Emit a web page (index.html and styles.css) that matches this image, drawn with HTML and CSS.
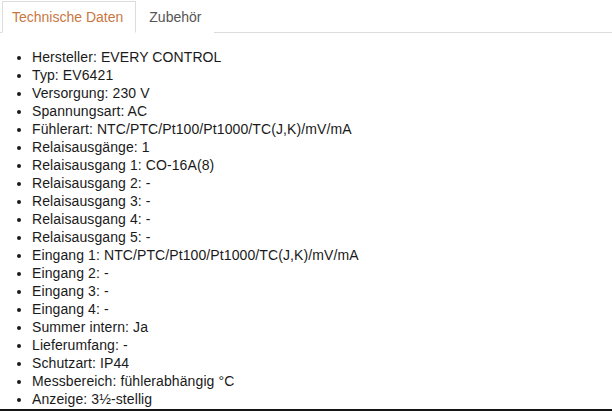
FILE: index.html
```html
<!DOCTYPE html>
<html lang="de">
<head>
<meta charset="utf-8">
<title>Technische Daten</title>
<link rel="stylesheet" href="styles.css">
</head>
<body>
<div class="page">
  <ul class="tabs">
    <li class="tab active">Technische Daten</li>
    <li class="tab">Zubehör</li>
  </ul>
  <ul class="specs">
    <li>Hersteller: EVERY CONTROL</li>
    <li>Typ: EV6421</li>
    <li>Versorgung: 230 V</li>
    <li>Spannungsart: AC</li>
    <li>Fühlerart: NTC/PTC/Pt100/Pt1000/TC(J,K)/mV/mA</li>
    <li>Relaisausgänge: 1</li>
    <li>Relaisausgang 1: CO-16A(8)</li>
    <li>Relaisausgang 2: -</li>
    <li>Relaisausgang 3: -</li>
    <li>Relaisausgang 4: -</li>
    <li>Relaisausgang 5: -</li>
    <li>Eingang 1: NTC/PTC/Pt100/Pt1000/TC(J,K)/mV/mA</li>
    <li>Eingang 2: -</li>
    <li>Eingang 3: -</li>
    <li>Eingang 4: -</li>
    <li>Summer intern: Ja</li>
    <li>Lieferumfang: -</li>
    <li>Schutzart: IP44</li>
    <li>Messbereich: fühlerabhängig °C</li>
    <li>Anzeige: 3½-stellig</li>
  </ul>
</div>
</body>
</html>
```

FILE: styles.css
```css
html, body {
  margin: 0;
  padding: 0;
  background: #fff;
}
.page {
  height: 411px;
  box-sizing: border-box;
  border-bottom: 2px solid #151515;
  overflow: hidden;
  font-family: "Liberation Sans", Arial, sans-serif;
  font-size: 14px;
  line-height: 18px;
  color: #222;
}
.tabs {
  list-style: none;
  margin: 1px 0 0 0;
  padding: 0 0 0 2px;
  display: flex;
  border-bottom: 1px solid #dddddd;
}
.tab {
  margin-bottom: -1px;
  padding: 6px 12px 6px 12px;
  border: 1px solid transparent;
  color: #555;
  background: #fff;
}
.tab.active {
  padding-left: 9px;
  border-color: #dddddd #dddddd #fff #dddddd;
  color: #c8783f;
}
.specs {
  margin: 15px 0 0 0;
  padding: 0 0 0 32px;
  list-style: disc;
  color: #1a1a1a;
  letter-spacing: 0.1px;
}
```
